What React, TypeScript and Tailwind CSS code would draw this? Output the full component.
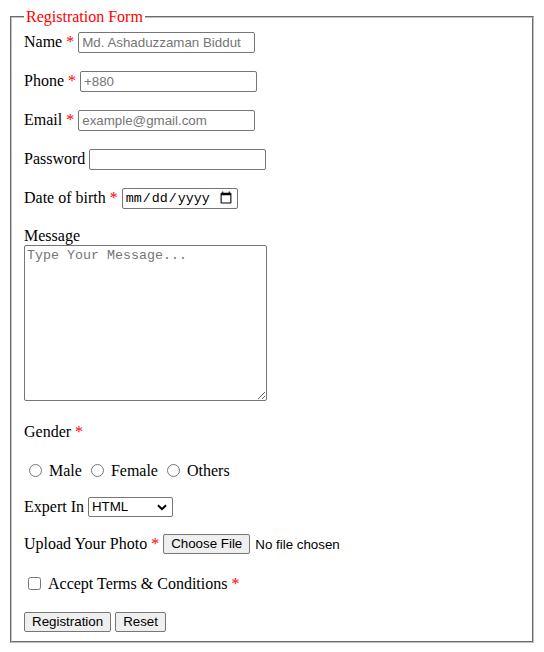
import { useState } from 'react'

const inputCls =
  "h-[21px] w-[177px] rounded-[2px] border border-[#767676] bg-white px-[3px] font-['Liberation_Sans',Arial,sans-serif] text-[13.33px] text-black outline-none placeholder:text-[#757575]"

const btnCls =
  "h-[20px] rounded-[2px] border border-[#767676] bg-[#efefef] px-[7px] font-['Liberation_Sans',Arial,sans-serif] text-[13.33px] leading-none text-black"

function Req() {
  return <span className="text-[#ff0000]">*</span>
}

export default function App() {
  const [gender, setGender] = useState('')
  const [skill, setSkill] = useState('html')

  return (
    <div className="min-h-screen bg-white p-2 font-['Liberation_Serif','Times_New_Roman',serif] text-[16px] leading-[normal] text-black">
      <form onSubmit={e => e.preventDefault()}>
        <fieldset className="mx-[2px] border-2 border-[#c0c0c0] px-3 pb-[9px] pt-[5.6px] [border-style:groove]">
          <legend className="px-[2px] text-[#ff0000]">Registration Form</legend>

          <div className="flex h-[21px] items-center gap-1">
            <label htmlFor="name">
              Name <Req />
            </label>
            <input id="name" type="text" placeholder="Md. Ashaduzzaman Biddut" className={inputCls} />
          </div>

          <div className="mt-[18px] flex h-[21px] items-center gap-1">
            <label htmlFor="phone">
              Phone <Req />
            </label>
            <input id="phone" type="tel" placeholder="+880" className={inputCls} />
          </div>

          <div className="mt-[18px] flex h-[21px] items-center gap-1">
            <label htmlFor="email">
              Email <Req />
            </label>
            <input id="email" type="email" placeholder="example@gmail.com" className={inputCls} />
          </div>

          <div className="mt-[18px] flex h-[21px] items-center gap-1">
            <label htmlFor="password">Password</label>
            <input id="password" type="password" className={inputCls} />
          </div>

          <div className="mt-[18px] flex h-[21px] items-center gap-1">
            <label htmlFor="dob">
              Date of birth <Req />
            </label>
            <input
              id="dob"
              type="date"
              className="h-[21px] w-[116px] rounded-[2px] border border-[#767676] bg-white px-[2px] font-['Liberation_Mono',monospace] text-[13.33px] text-black outline-none"
            />
          </div>

          <div className="mt-[18px] h-[18px]">
            <label htmlFor="message">Message</label>
          </div>
          <textarea
            id="message"
            placeholder="Type Your Message..."
            className="block h-[156px] w-[243px] rounded-[2px] border border-[#767676] bg-white p-[2px] font-['Liberation_Mono',monospace] text-[13.33px] leading-[15px] text-black outline-none placeholder:text-[#757575]"
          />

          <div className="mt-[22px] h-[18px]">
            Gender <Req />
          </div>

          <div className="mt-[20px] flex h-[20px] items-center">
            {['Male', 'Female', 'Others'].map(g => (
              <label key={g} className="flex items-center">
                <input
                  type="radio"
                  name="gender"
                  value={g}
                  checked={gender === g}
                  onChange={() => setGender(g)}
                  className="ml-[5px] mr-[3px] size-[13px]"
                />
                <span className="ml-1 mr-1">{g}</span>
              </label>
            ))}
          </div>

          <div className="mt-[16px] flex h-[20px] items-center gap-1">
            <label htmlFor="skill">Expert In</label>
            <div className="relative">
              <select
                id="skill"
                value={skill}
                onChange={e => setSkill(e.target.value)}
                className="block h-[20px] w-[85px] appearance-none rounded-[2px] border border-[#767676] bg-white pl-[3px] font-['Liberation_Sans',Arial,sans-serif] text-[13.33px] text-black outline-none"
              >
                <option value="html">HTML</option>
                <option value="css">CSS</option>
                <option value="js">JavaScript</option>
              </select>
              <svg
                className="pointer-events-none absolute right-[6px] top-[7px]"
                width="10"
                height="7"
                viewBox="0 0 10 7"
                fill="none"
              >
                <path d="M1 1.2 5 5.2 9 1.2" stroke="#000" strokeWidth="2" />
              </svg>
            </div>
          </div>

          <div className="mt-[17px] flex h-[20px] items-center gap-1">
            <label htmlFor="photo">
              Upload Your Photo <Req />
            </label>
            <input
              id="photo"
              type="file"
              className="font-['Liberation_Sans',Arial,sans-serif] text-[13.33px] text-black file:mr-[5px] file:h-[20px] file:rounded-[2px] file:border file:border-[#767676] file:bg-[#efefef] file:px-[7px] file:text-[13.33px] file:text-black"
            />
          </div>

          <div className="mt-[20px] flex h-[20px] items-center">
            <input id="terms" type="checkbox" className="ml-[4px] mr-[3px] size-[13px]" />
            <label htmlFor="terms" className="ml-1">
              Accept Terms &amp; Conditions <Req />
            </label>
          </div>

          <div className="mt-[18px] flex h-[20px] items-center gap-1">
            <button type="submit" className={btnCls}>
              Registration
            </button>
            <button type="reset" className={btnCls}>
              Reset
            </button>
          </div>
        </fieldset>
      </form>
    </div>
  )
}
